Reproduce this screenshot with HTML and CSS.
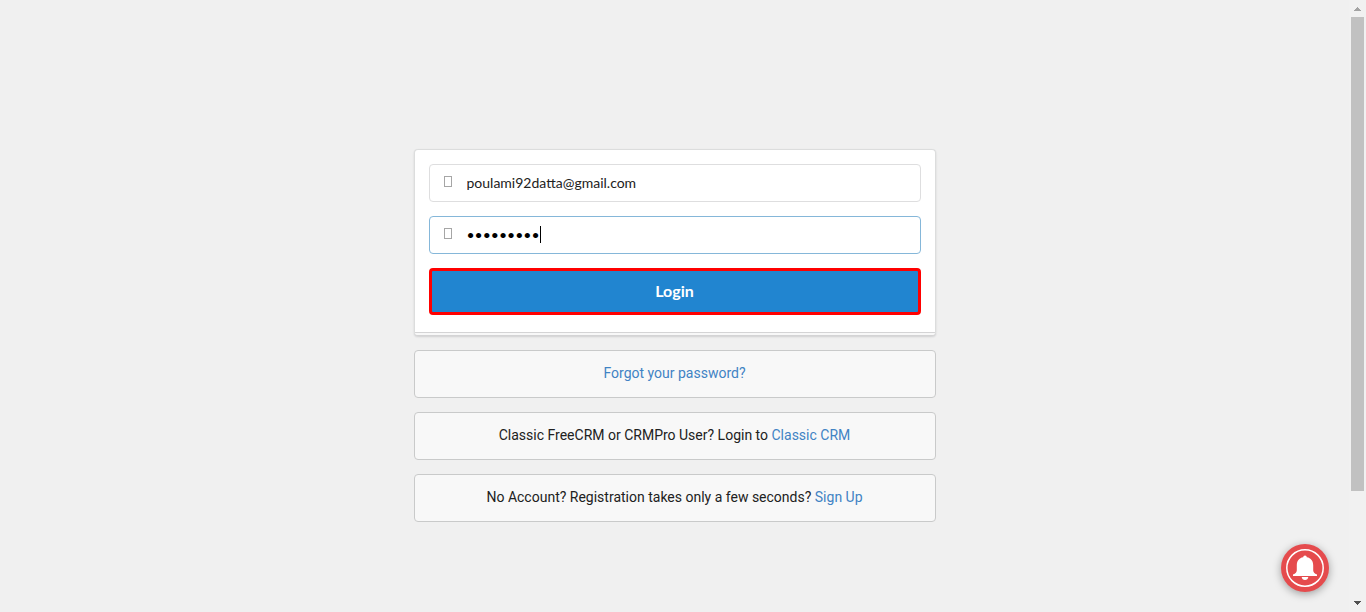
FILE: index.html
```html
<!DOCTYPE html>
<html lang="en">
<head>
<meta charset="utf-8">
<meta name="viewport" content="width=device-width, initial-scale=1">
<title>Login</title>
<link rel="stylesheet" href="styles.css">
</head>
<body class="page">
<main class="content">
  <div class="column">
    <form class="card">
      <div class="card-body">
        <div class="field">
          <svg class="field-icon" viewBox="0 0 8 11" aria-hidden="true"><rect x=".5" y=".5" width="7" height="10"/></svg>
          <input class="field-input" type="email" aria-label="Email" value="poulami92datta@gmail.com">
        </div>
        <div class="field field-active">
          <svg class="field-icon" viewBox="0 0 8 11" aria-hidden="true"><rect x=".5" y=".5" width="7" height="10"/></svg>
          <input class="field-input" type="password" aria-label="Password" value="123456789">
          <span class="caret"></span>
        </div>
        <button class="login" type="button">Login</button>
      </div>
      <div class="card-foot"></div>
    </form>
    <p class="message"><a class="link" href="#">Forgot your password?</a></p>
    <p class="message">Classic FreeCRM or CRMPro User? Login to <a class="link" href="#">Classic CRM</a></p>
    <p class="message">No Account? Registration takes only a few seconds? <a class="link" href="#">Sign Up</a></p>
  </div>
</main>
<div class="scrollbar" aria-hidden="true">
  <svg class="arrow arrow-up" viewBox="0 0 7 4"><path d="M3 0h1v1h1v1h1v1h1v1H0V3h1V2h1V1h1z"/></svg>
  <div class="track"><div class="thumb"></div></div>
  <svg class="arrow" viewBox="0 0 7 4"><path d="M0 0h7v1H6v1H5v1H4v1H3V3H2V2H1V1H0z"/></svg>
</div>
<button class="bell" type="button" aria-label="Notifications">
  <svg class="bell-icon" viewBox="0 0 48 48" aria-hidden="true">
    <circle cx="24" cy="24" r="18.2" fill="none" stroke="#fff" stroke-width="1.5"/>
    <path fill="#fff" d="M22.2 13.2a1.8 1.8 0 0 1 3.6 0c4.2.7 6.4 3.8 6.4 8v5c0 2 1.2 3 3.8 4.4V32H12v-1.4c2.6-1.4 3.8-2.4 3.8-4.4v-5c0-4.2 2.2-7.3 6.4-8zM20.7 33h6.6c-.2 1.9-1.5 3-3.3 3s-3.1-1.1-3.3-3z"/>
  </svg>
</button>
</body>
</html>
```
FILE: styles.css
```css
* { box-sizing: border-box; }
.page {
  display: flex;
  min-height: 100vh;
  margin: 0;
  background: #f0f0f0;
  color: #212121;
  font: 14px/20px Roboto, sans-serif;
}
.content {
  flex: 1;
  padding: 149px 16px 32px;
}
.column {
  display: flex;
  flex-direction: column;
  gap: 14px;
  max-width: 522px;
  margin: 0 auto;
}
.card {
  border: 1px solid #dcdddd;
  border-bottom-color: #d4d4d5;
  border-radius: 4px;
  background: #fff;
  box-shadow: 0 1px 2px rgba(34, 36, 38, .15);
}
.card-body {
  display: flex;
  flex-direction: column;
  gap: 14px;
  padding: 14px 14px 17px;
}
.card-foot {
  height: 3px;
  border-top: 1px solid #d4d4d5;
  border-radius: 0 0 4px 4px;
  background: #f8f8f8;
}
.field {
  position: relative;
  display: flex;
  align-items: center;
  height: 38px;
  border: 1px solid #dededf;
  border-radius: 4px;
}
.field-active { border-color: #85b7d9; }
.field-icon {
  width: 8px;
  height: 11px;
  margin: 0 15px 3px 14px;
  fill: none;
  stroke: #a6a6a6;
  stroke-width: 1;
}
.field-input {
  flex: 1;
  min-width: 0;
  height: 100%;
  padding: 0 14px 2px 0;
  border: 0;
  outline: 0;
  background: none;
  color: #212121;
  font: 14px Lato, sans-serif;
}
.field-active .field-input { color: #000; }
.caret {
  position: absolute;
  top: 9px;
  left: 110px;
  width: 1px;
  height: 17px;
  background: #000;
}
.login {
  height: 47px;
  padding: 0 0 2px;
  border: 3px solid #f00;
  border-radius: 4px;
  background: #2185d0;
  color: #fff;
  font: bold 16px/16px Lato, sans-serif;
}
.message {
  margin: 0;
  padding: 12px 13px 14px;
  border: 1px solid #c9caca;
  border-radius: 4px;
  background: #f8f8f8;
  text-align: center;
}
.link {
  color: #4183c4;
  text-decoration: none;
}
.scrollbar {
  display: flex;
  flex-direction: column;
  align-items: center;
  width: 17px;
  padding: 7px 0;
  background: #f1f1f1;
}
.arrow { width: 7px; height: 4px; fill: #505050; }
.arrow-up { fill: #a3a3a3; }
.track { flex: 1; width: 13px; padding: 6px 0; }
.thumb { height: 82%; background: #c1c1c1; }
.bell {
  position: fixed;
  right: 37px;
  bottom: 20px;
  width: 48px;
  height: 48px;
  padding: 0;
  border: 0;
  border-radius: 50%;
  background: #e54b4d;
  box-shadow: 0 2px 8px rgba(0, 0, 0, .35);
}
.bell-icon { display: block; width: 48px; height: 48px; }
```
